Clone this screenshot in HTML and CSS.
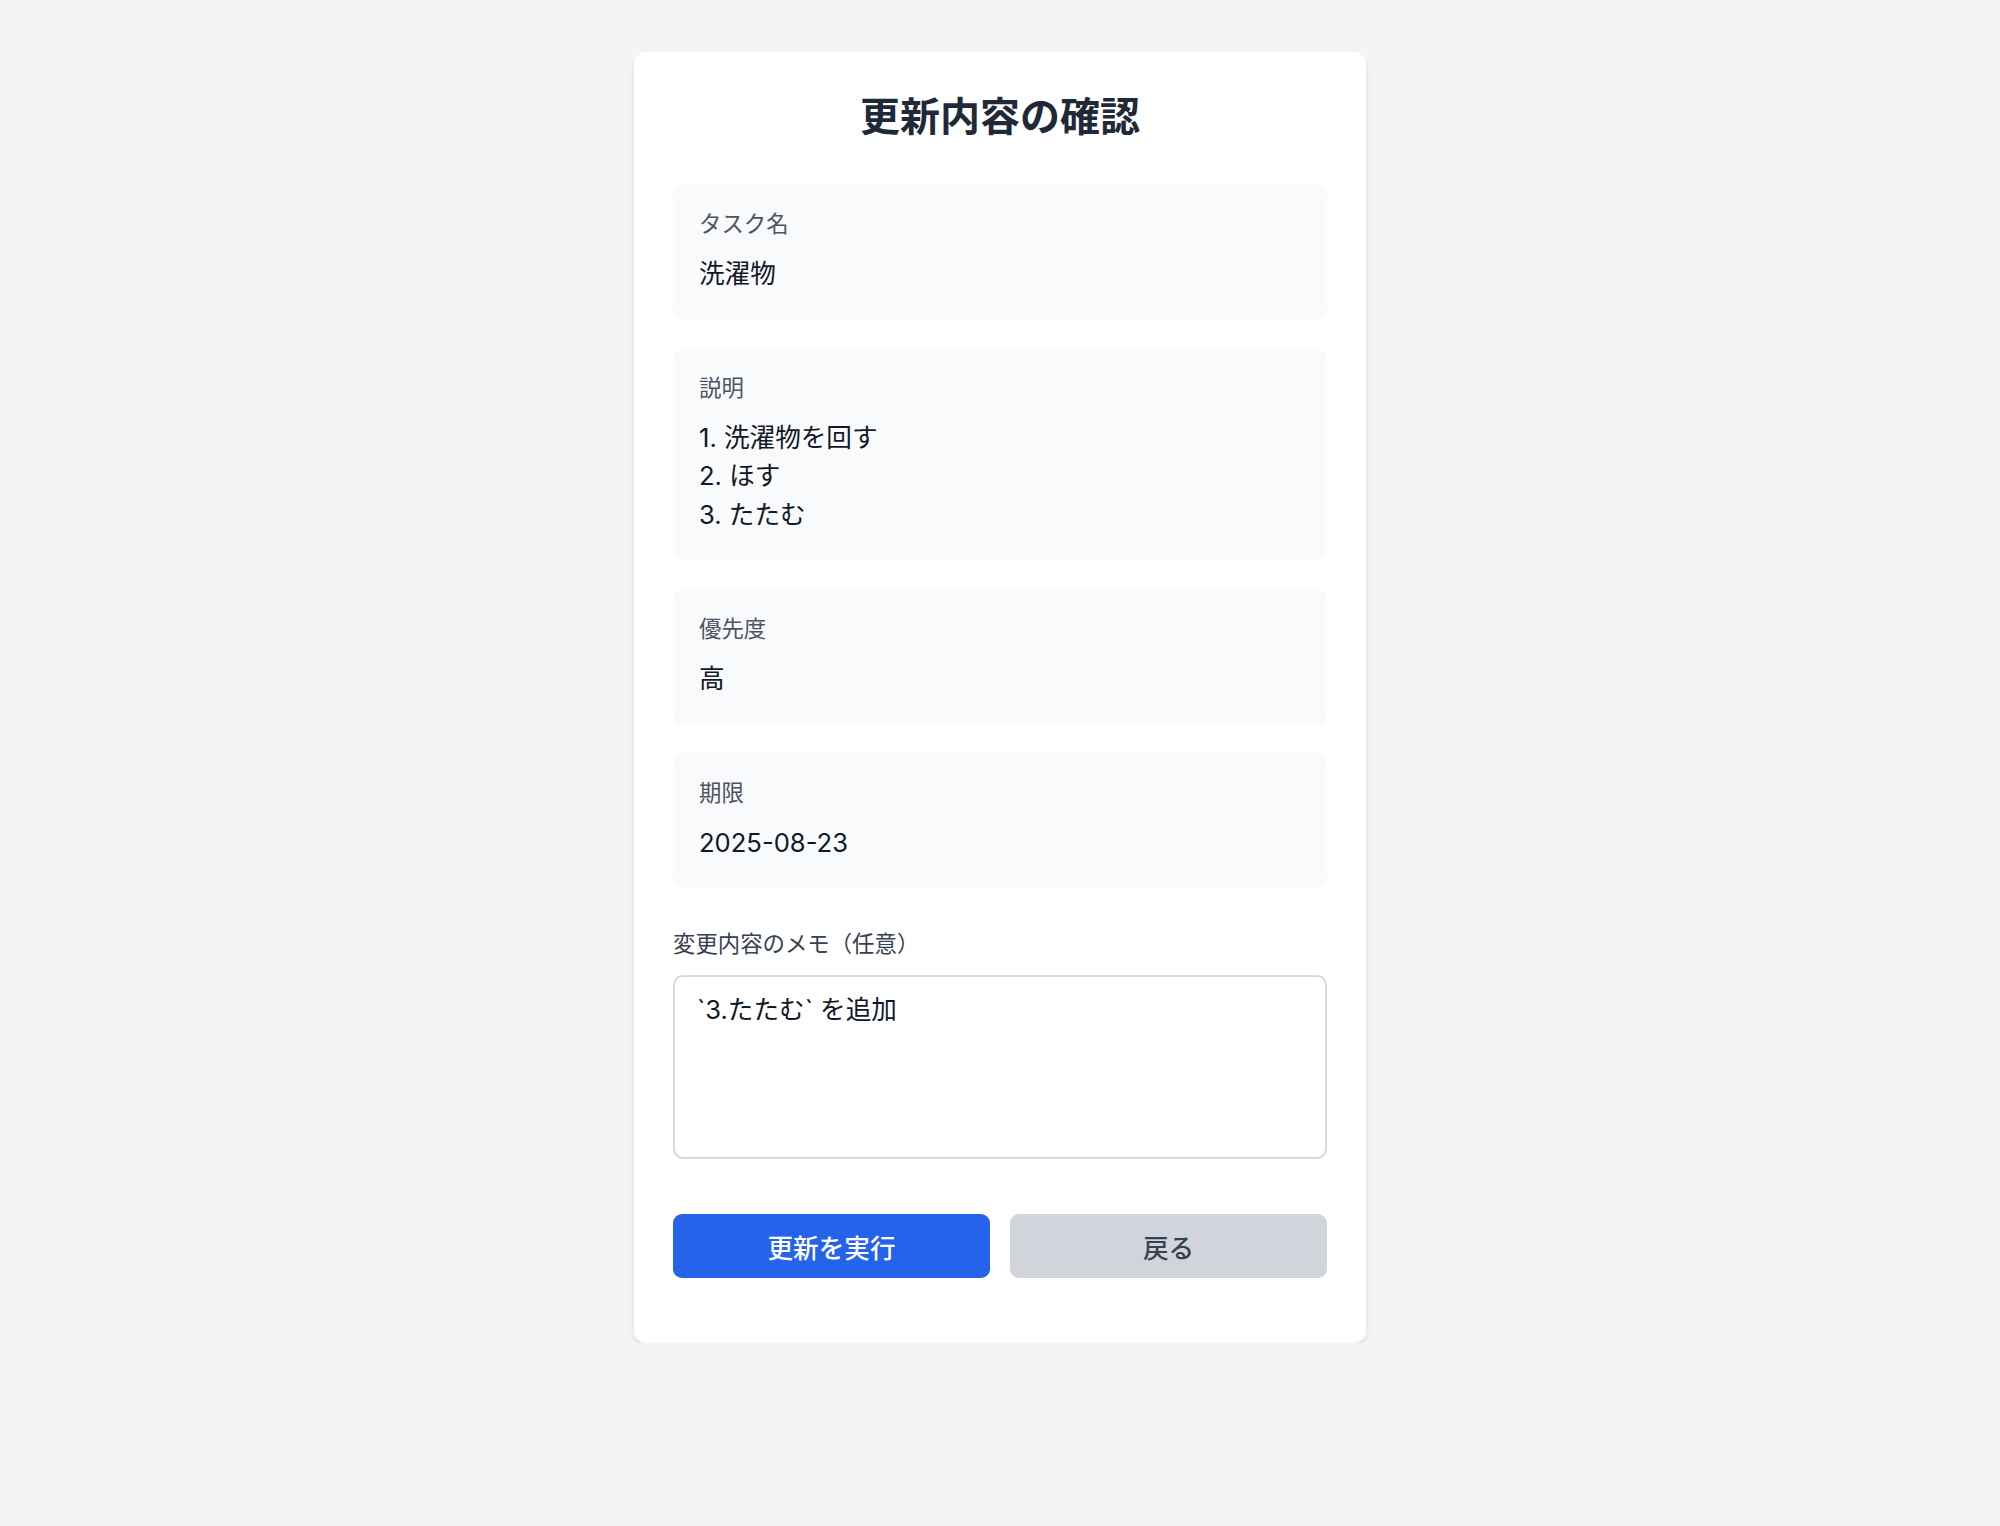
FILE: index.html
```html
<!DOCTYPE html>
<html lang="ja">
<head>
    <meta charset="UTF-8">
    <meta name="viewport" content="width=device-width, initial-scale=1.0">
    <title>更新内容の確認</title>
    <link rel="stylesheet" href="styles.css">
</head>
<body>
    <div class="page">
        <div class="card">
            <h1 class="title">更新内容の確認</h1>

            <!-- 更新後の内容 -->
            <div class="fields">
                <div class="field">
                    <div class="field-label">タスク名</div>
                    <div class="field-value">洗濯物</div>
                </div>

                <div class="field">
                    <div class="field-label">説明</div>
                    <div class="field-value multiline">1. 洗濯物を回す
2. ほす
3. たたむ</div>
                </div>

                <div class="field">
                    <div class="field-label">優先度</div>
                    <div class="field-value">高</div>
                </div>

                <div class="field">
                    <div class="field-label">期限</div>
                    <div class="field-value">2025-08-23</div>
                </div>
            </div>

            <!-- メモ -->
            <div class="memo">
                <label class="memo-label" for="memo">変更内容のメモ（任意）</label>
                <textarea id="memo" class="memo-input">`3.たたむ` を追加</textarea>
            </div>

            <div class="actions">
                <button class="btn btn-primary">更新を実行</button>
                <button class="btn btn-secondary">戻る</button>
            </div>
        </div>
    </div>
</body>
</html>
```

FILE: styles.css
```css
body {
    margin: 0;
    font-family: Inter, "Noto Sans CJK JP", sans-serif;
    background-color: #f3f4f6;
    color: #111827;
}

.page {
    display: flex;
    justify-content: center;
    padding-top: 52px;
}

.card {
    width: 732px;
    box-sizing: border-box;
    padding: 39px 39px 65px 39px;
    background-color: #fff;
    border-radius: 12px;
    box-shadow: 0 4px 6px -1px rgba(0, 0, 0, 0.1), 0 2px 4px -2px rgba(0, 0, 0, 0.1);
}

.title {
    margin: 0 0 42px 0;
    text-align: center;
    font-size: 40px;
    line-height: 51px;
    font-weight: bold;
    color: #1f2937;
}

/* 項目 */
.fields {
    display: flex;
    flex-direction: column;
    gap: 28px;
}

.field {
    background-color: #f9fafb;
    border-radius: 10px;
    padding: 26px 26px 26.5px 26px;
}

.field-label {
    font-size: 22.4px;
    line-height: 28px;
    color: #4b5563;
}

.field-value {
    margin-top: 17px;
    font-size: 25.6px;
    line-height: 38.4px;
    color: #111827;
}

.multiline {
    white-space: pre-line;
}

/* メモ */
.memo {
    margin-top: 40px;
}

.memo-label {
    display: block;
    margin-bottom: 15px;
    font-size: 22.4px;
    line-height: 32px;
    color: #374151;
}

.memo-input {
    display: block;
    width: 100%;
    height: 184px;
    box-sizing: border-box;
    padding: 14px 22px;
    border: 2px solid #d6d9de;
    border-radius: 10px;
    font-family: inherit;
    font-size: 25.6px;
    line-height: 38.4px;
    color: #111827;
    resize: none;
    outline: none;
}

/* ボタン */
.actions {
    display: flex;
    gap: 20px;
    margin-top: 55px;
}

.btn {
    flex: 1;
    height: 64px;
    border: none;
    border-radius: 9px;
    font-family: inherit;
    font-size: 25.6px;
    font-weight: 500;
    cursor: pointer;
}

.btn-primary {
    background-color: #2563eb;
    color: #fff;
}

.btn-secondary {
    background-color: #d1d5db;
    color: #374151;
}
```
